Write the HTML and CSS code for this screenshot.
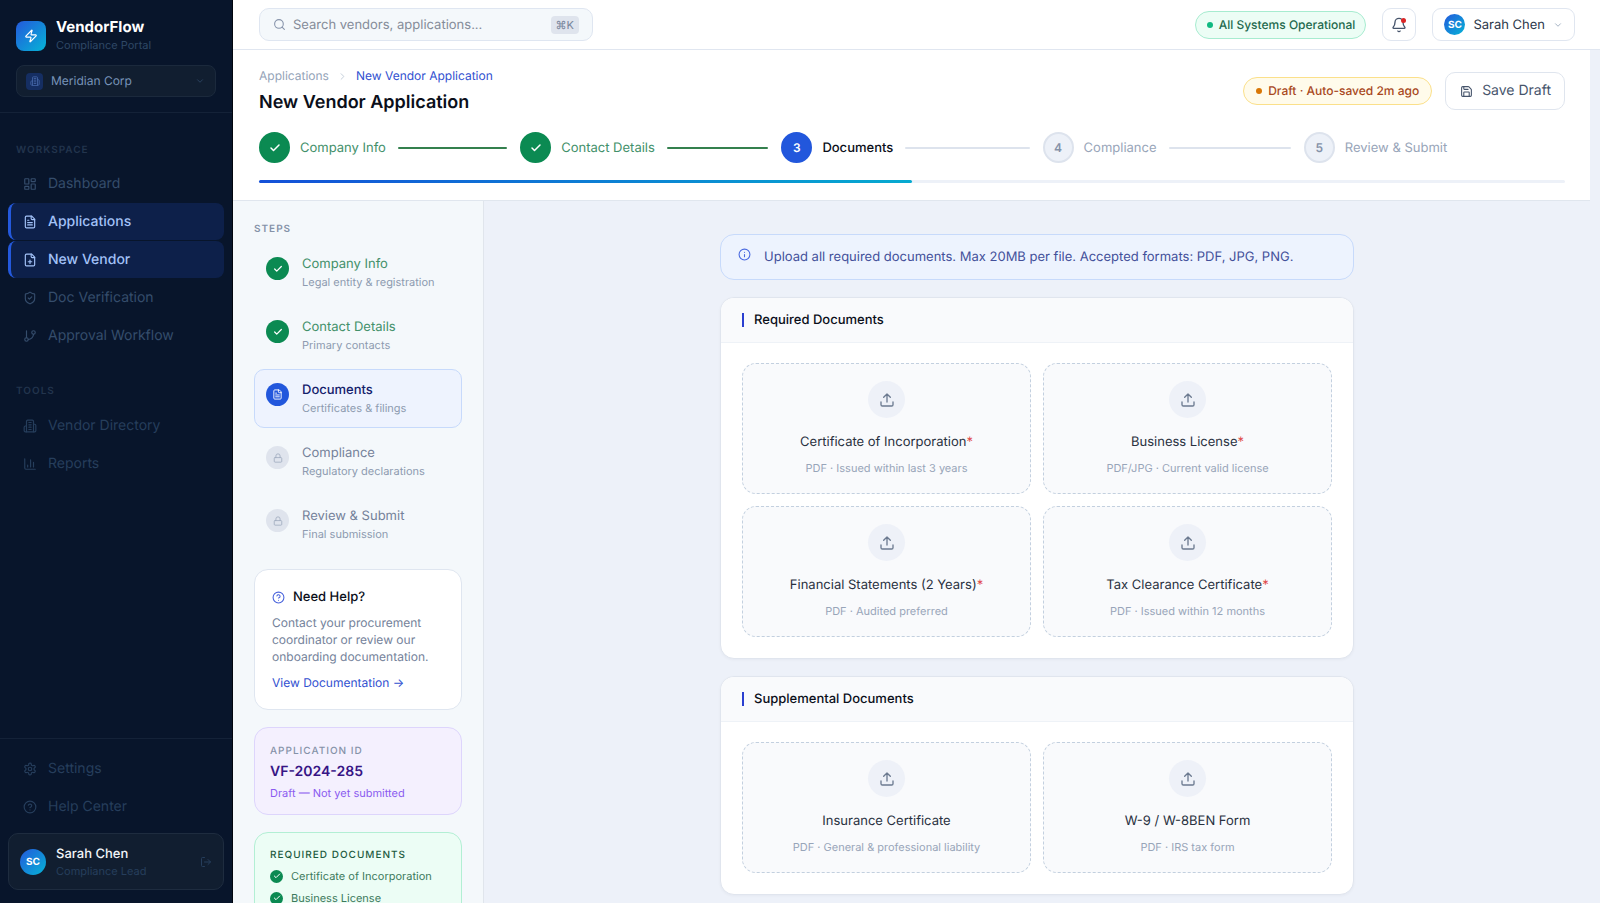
FILE: index.html
```html
<!DOCTYPE html>
<html lang="en">
<head>
<meta charset="utf-8">
<meta name="viewport" content="width=device-width, initial-scale=1">
<title>New Vendor Application</title>
<link rel="stylesheet" href="styles.css">
</head>
<body>
<svg class="sprite" aria-hidden="true">
  <symbol id="zap" viewBox="0 0 24 24"><path d="M4 14a1 1 0 0 1-.78-1.63l9.9-10.2a.5.5 0 0 1 .86.46l-1.92 6.02A1 1 0 0 0 13 10h7a1 1 0 0 1 .78 1.63l-9.9 10.2a.5.5 0 0 1-.86-.46l1.92-6.02A1 1 0 0 0 11 14z"/></symbol>
  <symbol id="building" viewBox="0 0 24 24"><path d="M6 22V4a2 2 0 0 1 2-2h8a2 2 0 0 1 2 2v18Z"/><path d="M6 12H4a2 2 0 0 0-2 2v6a2 2 0 0 0 2 2h2M18 9h2a2 2 0 0 1 2 2v9a2 2 0 0 1-2 2h-2M10 6h4M10 10h4M10 14h4M10 18h4"/></symbol>
  <symbol id="down" viewBox="0 0 24 24"><path d="m6 9 6 6 6-6"/></symbol>
  <symbol id="right" viewBox="0 0 24 24"><path d="m9 18 6-6-6-6"/></symbol>
  <symbol id="dashboard" viewBox="0 0 24 24"><rect x="3" y="3" width="7" height="9" rx="1"/><rect x="14" y="3" width="7" height="5" rx="1"/><rect x="14" y="12" width="7" height="9" rx="1"/><rect x="3" y="16" width="7" height="5" rx="1"/></symbol>
  <symbol id="file" viewBox="0 0 24 24"><path d="M15 2H6a2 2 0 0 0-2 2v16a2 2 0 0 0 2 2h12a2 2 0 0 0 2-2V7Z"/><path d="M14 2v4a2 2 0 0 0 2 2h4M10 9H8M16 13H8M16 17H8"/></symbol>
  <symbol id="file-plus" viewBox="0 0 24 24"><path d="M15 2H6a2 2 0 0 0-2 2v16a2 2 0 0 0 2 2h12a2 2 0 0 0 2-2V7Z"/><path d="M14 2v4a2 2 0 0 0 2 2h4M9 15h6M12 18v-6"/></symbol>
  <symbol id="shield" viewBox="0 0 24 24"><path d="M20 13c0 5-3.5 7.5-7.66 8.95a1 1 0 0 1-.67-.01C7.5 20.5 4 18 4 13V6a1 1 0 0 1 1-1c2 0 4.5-1.2 6.24-2.72a1.17 1.17 0 0 1 1.52 0C14.51 3.81 17 5 19 5a1 1 0 0 1 1 1z"/><path d="m9 12 2 2 4-4"/></symbol>
  <symbol id="branch" viewBox="0 0 24 24"><path d="M6 3v12M18 9a9 9 0 0 1-9 9"/><circle cx="18" cy="6" r="3"/><circle cx="6" cy="18" r="3"/></symbol>
  <symbol id="chart" viewBox="0 0 24 24"><path d="M3 3v16a2 2 0 0 0 2 2h16M18 17V9M13 17V5M8 17v-3"/></symbol>
  <symbol id="gear" viewBox="0 0 24 24"><path d="M12.22 2h-.44a2 2 0 0 0-2 2v.18a2 2 0 0 1-1 1.73l-.43.25a2 2 0 0 1-2 0l-.15-.08a2 2 0 0 0-2.73.73l-.22.38a2 2 0 0 0 .73 2.73l.15.1a2 2 0 0 1 1 1.72v.51a2 2 0 0 1-1 1.74l-.15.09a2 2 0 0 0-.73 2.73l.22.38a2 2 0 0 0 2.73.73l.15-.08a2 2 0 0 1 2 0l.43.25a2 2 0 0 1 1 1.73V20a2 2 0 0 0 2 2h.44a2 2 0 0 0 2-2v-.18a2 2 0 0 1 1-1.73l.43-.25a2 2 0 0 1 2 0l.15.08a2 2 0 0 0 2.73-.73l.22-.39a2 2 0 0 0-.73-2.73l-.15-.08a2 2 0 0 1-1-1.74v-.5a2 2 0 0 1 1-1.74l.15-.09a2 2 0 0 0 .73-2.73l-.22-.38a2 2 0 0 0-2.73-.73l-.15.08a2 2 0 0 1-2 0l-.43-.25a2 2 0 0 1-1-1.73V4a2 2 0 0 0-2-2z"/><circle cx="12" cy="12" r="3"/></symbol>
  <symbol id="help" viewBox="0 0 24 24"><circle cx="12" cy="12" r="10"/><path d="M9.09 9a3 3 0 0 1 5.83 1c0 2-3 3-3 3M12 17h.01"/></symbol>
  <symbol id="info" viewBox="0 0 24 24"><circle cx="12" cy="12" r="10"/><path d="M12 16v-4M12 8h.01"/></symbol>
  <symbol id="logout" viewBox="0 0 24 24"><path d="M9 21H5a2 2 0 0 1-2-2V5a2 2 0 0 1 2-2h4M16 17l5-5-5-5M21 12H9"/></symbol>
  <symbol id="search" viewBox="0 0 24 24"><circle cx="11" cy="11" r="8"/><path d="m21 21-4.3-4.3"/></symbol>
  <symbol id="bell" viewBox="0 0 24 24"><path d="M10.27 21a2 2 0 0 0 3.46 0M3.26 15.33A1 1 0 0 0 4 17h16a1 1 0 0 0 .74-1.67C19.41 13.96 18 12.5 18 8A6 6 0 0 0 6 8c0 4.5-1.41 5.96-2.74 7.33"/></symbol>
  <symbol id="save" viewBox="0 0 24 24"><path d="M15.2 3a2 2 0 0 1 1.4.6l3.8 3.8a2 2 0 0 1 .6 1.4V19a2 2 0 0 1-2 2H5a2 2 0 0 1-2-2V5a2 2 0 0 1 2-2z"/><path d="M17 21v-7a1 1 0 0 0-1-1H8a1 1 0 0 0-1 1v7M7 3v4a1 1 0 0 0 1 1h7"/></symbol>
  <symbol id="upload" viewBox="0 0 24 24"><path d="M12 3v12M17 8l-5-5-5 5M21 15v4a2 2 0 0 1-2 2H5a2 2 0 0 1-2-2v-4"/></symbol>
  <symbol id="lock" viewBox="0 0 24 24"><rect x="3" y="11" width="18" height="11" rx="2"/><path d="M7 11V7a5 5 0 0 1 10 0v4"/></symbol>
  <symbol id="check" viewBox="0 0 24 24"><path d="M20 6 9 17l-5-5"/></symbol>
</svg>

<div class="app">
  <aside class="sidebar">
    <div class="side-top">
      <div class="brand">
        <span class="logo"><svg class="icon i14"><use href="#zap"/></svg></span>
        <div><div class="brand-name">VendorFlow</div><div class="brand-sub">Compliance Portal</div></div>
      </div>
      <div class="org">
        <span class="org-icon"><svg class="icon i10"><use href="#building"/></svg></span>
        <select class="org-select" aria-label="Organization"><option>Meridian Corp</option></select>
        <svg class="icon i10"><use href="#down"/></svg>
      </div>
    </div>
    <nav class="nav" aria-label="Main">
      <div class="nav-title">Workspace</div>
      <a class="nav-item" href="#"><svg class="icon i14"><use href="#dashboard"/></svg>Dashboard</a>
      <a class="nav-item active" href="#"><svg class="icon i14"><use href="#file"/></svg>Applications</a>
      <a class="nav-item active" href="#"><svg class="icon i14"><use href="#file-plus"/></svg>New Vendor</a>
      <a class="nav-item" href="#"><svg class="icon i14"><use href="#shield"/></svg>Doc Verification</a>
      <a class="nav-item" href="#"><svg class="icon i14"><use href="#branch"/></svg>Approval Workflow</a>
      <div class="nav-title tools">Tools</div>
      <a class="nav-item dim" href="#"><svg class="icon i14"><use href="#building"/></svg>Vendor Directory</a>
      <a class="nav-item dim" href="#"><svg class="icon i14"><use href="#chart"/></svg>Reports</a>
    </nav>
    <div class="side-bottom">
      <a class="nav-item dim" href="#"><svg class="icon i14"><use href="#gear"/></svg>Settings</a>
      <a class="nav-item dim" href="#"><svg class="icon i14"><use href="#help"/></svg>Help Center</a>
      <div class="profile">
        <span class="avatar">SC</span>
        <div class="profile-text"><div class="profile-name">Sarah Chen</div><div class="profile-role">Compliance Lead</div></div>
        <button class="plain" aria-label="Log out"><svg class="icon i12"><use href="#logout"/></svg></button>
      </div>
    </div>
  </aside>

  <div class="main">
    <header class="topbar">
      <div class="search">
        <svg class="icon i13"><use href="#search"/></svg>
        <input class="search-input" type="text" aria-label="Search" placeholder="Search vendors, applications...">
        <kbd class="kbd">⌘K</kbd>
      </div>
      <div class="top-actions">
        <span class="pill ok"><i class="dot"></i>All Systems Operational</span>
        <button class="bell" aria-label="Notifications"><svg class="icon i16"><use href="#bell"/></svg><i class="badge"></i></button>
        <button class="user"><span class="avatar small">SC</span>Sarah Chen<svg class="icon i10"><use href="#down"/></svg></button>
      </div>
    </header>

    <div class="scroller">
      <section class="page-head">
        <div class="head-row">
          <div>
            <nav class="crumbs" aria-label="Breadcrumb"><a href="#">Applications</a><svg class="icon i11"><use href="#right"/></svg><a class="current" href="#">New Vendor Application</a></nav>
            <h1>New Vendor Application</h1>
          </div>
          <div class="head-actions">
            <span class="pill draft"><i class="dot"></i>Draft · Auto-saved 2m ago</span>
            <button class="save"><svg class="icon i13"><use href="#save"/></svg>Save Draft</button>
          </div>
        </div>
        <ol class="stepper">
          <li class="done"><span class="num"><svg class="icon i12 bold"><use href="#check"/></svg></span>Company Info<i class="line"></i></li>
          <li class="done"><span class="num"><svg class="icon i12 bold"><use href="#check"/></svg></span>Contact Details<i class="line"></i></li>
          <li class="now"><span class="num">3</span>Documents<i class="line"></i></li>
          <li><span class="num">4</span>Compliance<i class="line"></i></li>
          <li><span class="num">5</span>Review &amp; Submit</li>
        </ol>
        <div class="progress"><div class="progress-fill" style="width:50%"></div></div>
      </section>

      <div class="columns">
        <aside class="panel">
          <div class="label steps-title">Steps</div>
          <ol class="steps">
            <li class="done"><span class="mark"><svg class="icon i10 bold"><use href="#check"/></svg></span><div><div class="step-name">Company Info</div><div class="step-sub">Legal entity &amp; registration</div></div></li>
            <li class="done"><span class="mark"><svg class="icon i10 bold"><use href="#check"/></svg></span><div><div class="step-name">Contact Details</div><div class="step-sub">Primary contacts</div></div></li>
            <li class="now"><span class="mark"><svg class="icon i11"><use href="#file"/></svg></span><div><div class="step-name">Documents</div><div class="step-sub">Certificates &amp; filings</div></div></li>
            <li><span class="mark"><svg class="icon i10"><use href="#lock"/></svg></span><div><div class="step-name">Compliance</div><div class="step-sub">Regulatory declarations</div></div></li>
            <li><span class="mark"><svg class="icon i10"><use href="#lock"/></svg></span><div><div class="step-name">Review &amp; Submit</div><div class="step-sub">Final submission</div></div></li>
          </ol>
          <div class="side-card help">
            <h2><svg class="icon i13"><use href="#help"/></svg>Need Help?</h2>
            <p>Contact your procurement coordinator or review our onboarding documentation.</p>
            <a href="#">View Documentation →</a>
          </div>
          <div class="side-card app-id">
            <div class="label">Application ID</div>
            <div class="id-value">VF-2024-285</div>
            <div class="id-note">Draft — Not yet submitted</div>
          </div>
          <div class="side-card required">
            <div class="label">Required Documents</div>
            <ul>
              <li><span class="tick"><svg class="icon i8 bold"><use href="#check"/></svg></span>Certificate of Incorporation</li>
              <li><span class="tick"><svg class="icon i8 bold"><use href="#check"/></svg></span>Business License</li>
            </ul>
          </div>
        </aside>

        <main class="content">
          <div class="banner"><svg class="icon i13"><use href="#info"/></svg>Upload all required documents. Max 20MB per file. Accepted formats: PDF, JPG, PNG.</div>
          <section class="card">
            <h2 class="card-title">Required Documents</h2>
            <div class="zones">
              <button class="zone"><span class="zone-icon"><svg class="icon i16"><use href="#upload"/></svg></span><span class="zone-name">Certificate of Incorporation<b>*</b></span><span class="zone-sub">PDF · Issued within last 3 years</span></button>
              <button class="zone"><span class="zone-icon"><svg class="icon i16"><use href="#upload"/></svg></span><span class="zone-name">Business License<b>*</b></span><span class="zone-sub">PDF/JPG · Current valid license</span></button>
              <button class="zone"><span class="zone-icon"><svg class="icon i16"><use href="#upload"/></svg></span><span class="zone-name">Financial Statements (2 Years)<b>*</b></span><span class="zone-sub">PDF · Audited preferred</span></button>
              <button class="zone"><span class="zone-icon"><svg class="icon i16"><use href="#upload"/></svg></span><span class="zone-name">Tax Clearance Certificate<b>*</b></span><span class="zone-sub">PDF · Issued within 12 months</span></button>
            </div>
          </section>
          <section class="card">
            <h2 class="card-title">Supplemental Documents</h2>
            <div class="zones">
              <button class="zone"><span class="zone-icon"><svg class="icon i16"><use href="#upload"/></svg></span><span class="zone-name">Insurance Certificate</span><span class="zone-sub">PDF · General &amp; professional liability</span></button>
              <button class="zone"><span class="zone-icon"><svg class="icon i16"><use href="#upload"/></svg></span><span class="zone-name">W-9 / W-8BEN Form</span><span class="zone-sub">PDF · IRS tax form</span></button>
            </div>
          </section>
        </main>
      </div>
    </div>
  </div>
</div>
</body>
</html>
```

FILE: styles.css
```css
*, *::before, *::after { box-sizing: border-box; }
body { margin: 0; font: 13px/20px Inter, "Noto Sans", sans-serif; text-rendering: geometricPrecision; color: #0b0f1a; background: #edf1f9; }
h1, h2, p, ol, ul { margin: 0; padding: 0; }
ol, ul { list-style: none; }
a { text-decoration: none; color: inherit; }
button, input, select { font: inherit; color: inherit; text-rendering: inherit; padding: 0; margin: 0; border: 0; background: none; }
button { cursor: pointer; }
.sprite { display: none; }

.icon { flex: none; display: block; fill: none; stroke: currentColor; stroke-width: 2; stroke-linecap: round; stroke-linejoin: round; }
.icon.bold { stroke-width: 3; }
.i8 { width: 8px; height: 8px; }
.i10 { width: 10px; height: 10px; }
.i11 { width: 11px; height: 11px; }
.i12 { width: 12px; height: 12px; }
.i13 { width: 13px; height: 13px; }
.i14 { width: 14px; height: 14px; }
.i16 { width: 16px; height: 16px; }

.app { display: flex; height: 100vh; overflow: hidden; }

/* Sidebar */
.sidebar { flex: none; width: 233px; display: flex; flex-direction: column; background: #08152b; border-right: 1px solid #02060e; }
.side-top { padding: 18px 16px 15px; border-bottom: 1px solid #142238; }
.brand { display: flex; align-items: center; gap: 10px; }
.logo { flex: none; width: 30px; height: 30px; border-radius: 8px; display: grid; place-items: center; color: #fff; background: linear-gradient(135deg, #2459dc, #05b4d6); }
.brand-name { font-size: 15px; line-height: 18px; font-weight: 700; color: #fff; }
.brand-sub { font-size: 11px; line-height: 18px; color: #2f4866; }
.org { display: flex; align-items: center; gap: 8px; height: 32px; margin-top: 11px; padding: 0 10px 0 9px; border: 1px solid #1b293c; border-radius: 8px; background: #111e30; color: #2f4866; }
.org-icon { flex: none; width: 17px; height: 17px; border-radius: 4px; display: grid; place-items: center; background: #152e62; color: #4667a8; }
.org-select { flex: 1; min-width: 0; appearance: none; font-size: 12px; color: #7793b8; }
.nav { flex: 1; padding: 29px 8px 0; }
.nav-title { padding: 0 8px; margin-bottom: 7px; font-size: 10px; line-height: 16px; font-weight: 600; letter-spacing: 1px; text-transform: uppercase; color: #22344d; }
.nav-title.tools { margin: 29px 0 8px; }
.nav-item { display: flex; align-items: center; gap: 11px; height: 37px; margin-bottom: 1px; padding: 0 12px; border-left: 3px solid transparent; border-radius: 8px; font-size: 14px; color: #354d6c; }
.nav-item.dim { color: #263e5c; }
.nav-item.active { background: #0d204a; border-left-color: #2459dc; color: #a3c2f8; font-weight: 500; }
.side-bottom { padding: 11px 8px 13px; border-top: 1px solid #142238; }
.profile { display: flex; align-items: center; gap: 10px; height: 57px; margin-top: 8px; padding: 0 11px; border: 1px solid #1e2c3f; border-radius: 10px; background: #111e30; }
.profile-text { flex: 1; }
.profile-name { font-size: 13px; line-height: 18px; font-weight: 500; color: #f1f5f9; }
.profile-role { font-size: 11px; line-height: 16px; color: #263e5c; }
.plain { color: #263e5c; }
.avatar { flex: none; width: 26px; height: 26px; border-radius: 50%; display: grid; place-items: center; font-size: 10px; line-height: 12px; font-weight: 700; color: #fff; background: linear-gradient(135deg, #2459dc, #05b4d6); }
.avatar.small { width: 21px; height: 21px; }

/* Top bar */
.main { flex: 1; min-width: 0; display: flex; flex-direction: column; }
.topbar { flex: none; display: flex; align-items: center; justify-content: space-between; height: 50px; padding: 0 25px 0 26px; background: #fff; border-bottom: 1px solid #e0e6f0; }
.search { display: flex; align-items: center; gap: 7px; width: 334px; height: 33px; padding: 0 13px; border: 1px solid #dfe6f1; border-radius: 10px; background: #f4f8fb; color: #8794ab; }
.search-input { flex: 1; min-width: 0; outline: 0; }
.search-input::placeholder { color: #858c99; opacity: 1; }
.kbd { height: 18px; padding: 0 5px; border-radius: 4px; background: #dfe4ed; font: 11px/18px Inter, sans-serif; color: #77859b; }
.top-actions { display: flex; align-items: center; gap: 16px; }
.pill { display: flex; align-items: center; gap: 6px; height: 28px; padding: 0 12px; border: 1px solid; border-radius: 14px; font-size: 12px; font-weight: 500; white-space: nowrap; }
.pill .dot { width: 6px; height: 6px; border-radius: 50%; }
.pill.ok { padding: 0 10px 0 11px; background: #ecfdf5; border-color: #a7ecd0; color: #23694d; }
.pill.ok .dot { background: #10b981; }
.pill.draft { background: #fffbeb; border-color: #fbe08a; color: #a8481c; }
.pill.draft .dot { background: #d97706; }
.bell { position: relative; width: 34px; height: 33px; display: grid; place-items: center; border: 1px solid #e0e6f0; border-radius: 9px; color: #46546b; }
.badge { position: absolute; top: 9px; right: 9px; width: 5px; height: 5px; border-radius: 50%; background: #dc2626; }
.user { display: flex; align-items: center; gap: 8px; height: 33px; padding: 0 11px; border: 1px solid #e0e6f0; border-radius: 9px; color: #2b374a; }
.user .icon { color: #94a3b8; }

/* Page header */
.scroller { flex: 1; min-height: 0; display: flex; flex-direction: column; overflow-y: auto; scrollbar-width: none; padding-right: 10px; }
.page-head { flex: none; padding: 16px 25px 17px 26px; background: #fff; border-bottom: 1px solid #e0e6ee; }
.head-row { display: flex; align-items: center; justify-content: space-between; }
.crumbs { display: flex; align-items: center; gap: 8px; font-size: 12px; line-height: 20px; color: #94a3b8; }
.crumbs .current { color: #3150d0; }
.crumbs .icon { color: #c0cad8; }
h1 { margin-top: 4px; font-size: 18px; line-height: 26px; font-weight: 600; }
.head-actions { display: flex; align-items: center; gap: 13px; }
.save { display: flex; align-items: center; gap: 9px; height: 38px; padding: 0 13px 0 14px; border: 1px solid #dfe5ee; border-radius: 10px; font-size: 14px; color: #46546b; }
.stepper { display: grid; grid-template-columns: repeat(5, 1fr); margin-top: 16px; }
.stepper li { display: flex; align-items: center; gap: 10px; color: #98a5b9; white-space: nowrap; }
.num { flex: none; width: 31px; height: 31px; border-radius: 50%; display: grid; place-items: center; border: 2px solid #dde3ed; background: #edf1f8; color: #8592a8; font-size: 12px; font-weight: 600; }
.line { flex: 1; height: 2px; margin: 0 13px 0 2px; border-radius: 1px; background: #dde3ed; }
.stepper .done { color: #42906a; }
.done .num { background: #0b8a52; border-color: #0b8a52; color: #fff; }
.done .line { background: #34804e; }
.stepper .now { color: #0b0f1a; font-weight: 500; }
.now .num { background: #2257dc; border-color: #2257dc; color: #fff; }
.progress { height: 3px; margin-top: 17px; border-radius: 2px; background: #edf1f8; }
.progress-fill { height: 3px; border-radius: 2px; background: linear-gradient(90deg, #1450d8, #06aad0); }

/* Step panel */
.columns { flex: 1 0 auto; display: flex; }
.panel { flex: none; width: 251px; padding: 20px 21px; background: #f4f8fb; border-right: 1px solid #e0e5ec; }
.label { font-size: 10px; line-height: 16px; font-weight: 500; letter-spacing: 1px; text-transform: uppercase; color: #8592a8; }
.steps-title { font-weight: 600; }
.steps { display: grid; gap: 4px; margin-top: 6px; }
.steps li { display: flex; gap: 13px; height: 59px; padding: 11px 11px 0; border: 1px solid transparent; border-radius: 10px; }
.mark { flex: none; width: 23px; height: 23px; margin-top: 2px; border-radius: 50%; display: grid; place-items: center; background: #dfe4ed; color: #a0acbf; }
.step-name { line-height: 19px; color: #74829a; }
.step-sub { font-size: 11px; line-height: 17px; color: #8d9bb0; }
.steps .done .mark { background: #0b8a52; color: #fff; }
.steps .done .step-name { color: #42906a; }
.steps .now { background: #eef3fe; border-color: #c7dafb; }
.steps .now .mark { background: #2257dc; color: #fff; }
.steps .now .step-name { color: #14206b; font-weight: 500; }
.side-card { margin-top: 17px; border: 1px solid; border-radius: 14px; }
.help { margin-top: 15px; padding: 17px; background: #fff; border-color: #dfe6f0; }
.help h2 { display: flex; align-items: center; gap: 8px; font-size: 13px; line-height: 20px; font-weight: 500; }
.help h2 .icon { color: #4a64dc; }
.help p { margin: 7px 0 8px; font-size: 12px; line-height: 17px; color: #74829a; }
.help a { display: block; font-size: 12px; line-height: 19px; color: #3150d0; }
.app-id { padding: 15px 15px 12px; background: #f4f0fe; border-color: #ddd5fc; }
.id-value { font-size: 14px; line-height: 26px; font-weight: 600; color: #371585; }
.id-note { font-size: 11px; line-height: 17px; color: #8b5cf0; }
.required { padding: 14px 15px 28px; background: #ecfdf5; border-color: #b2efd4; }
.required .label { color: #1c5a3e; }
.required li { display: flex; align-items: center; gap: 8px; height: 22px; font-size: 11px; color: #3c7a5c; }
.required ul { margin-top: 2px; }
.tick { flex: none; width: 13px; height: 13px; border-radius: 50%; display: grid; place-items: center; background: #0b8a52; color: #fff; }

/* Documents */
.content { flex: 1; min-width: 0; display: flex; flex-direction: column; align-items: center; gap: 17px; padding: 33px 24px 40px; }
.banner { width: 100%; max-width: 634px; display: flex; gap: 13px; padding: 12px 17px; border: 1px solid #c7dafb; border-radius: 14px; background: #edf3fe; color: #43509a; }
.banner .icon { margin-top: 1px; color: #4a6ae0; }
.card { width: 100%; max-width: 634px; border: 1px solid #e0e5ee; border-radius: 14px; background: #fff; overflow: hidden; box-shadow: 0 1px 3px rgba(15, 23, 42, .04); }
.card-title { display: flex; align-items: center; gap: 10px; padding: 12px 21px; border-bottom: 1px solid #eef2f7; background: #f9fafc; font-size: 13px; line-height: 20px; font-weight: 500; }
.card-title::before { content: ""; width: 2px; height: 14px; background: #2a3fd0; }
.zones { display: grid; grid-template-columns: 1fr 1fr; gap: 12px; padding: 20px 21px 21px; }
.zone { display: flex; flex-direction: column; align-items: center; height: 131px; padding: 17px; border: 1px dashed #c3d0df; border-radius: 14px; background: #f9fafc; }
.zone-icon { width: 37px; height: 37px; border-radius: 50%; display: grid; place-items: center; background: #eef1f8; color: #6c7a90; }
.zone-name { margin-top: 14px; color: #29313f; }
.zone-name b { font-weight: 400; color: #e04848; }
.zone-sub { margin-top: 8px; font-size: 11px; line-height: 16px; color: #98a5b9; }
```
